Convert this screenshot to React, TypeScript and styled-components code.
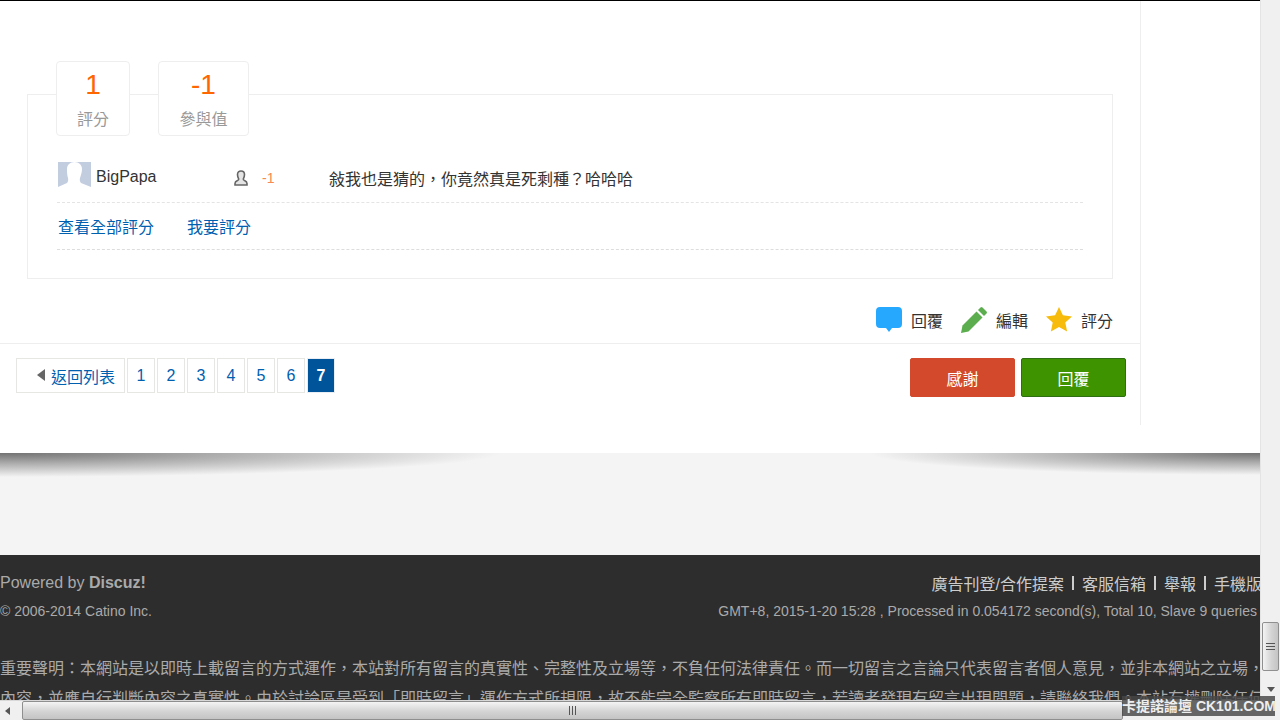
import React from "react";
import styled, { createGlobalStyle } from "styled-components";

const Global = createGlobalStyle`
  html, body {
    margin: 0;
    padding: 0;
    overflow: hidden;
    background: #fff;
  }
  * {
    box-sizing: border-box;
  }
  a {
    text-decoration: none;
  }
`;

const Frame = styled.div`
  position: relative;
  width: 1280px;
  height: 720px;
  overflow: hidden;
  display: grid;
  grid-template-columns: 1260px 20px;
  grid-template-rows: 700px 20px;
  font-family: "Liberation Sans", "Noto Sans CJK TC", sans-serif;
  font-size: 16px;
  color: #333;
`;

const Viewport = styled.div`
  overflow: hidden;
  border-top: 1px solid #000;
`;

const Sheet = styled.div`
  height: 452px;
  background: #fff;
`;

const Main = styled.div`
  width: 1141px;
  height: 424px;
  padding-top: 60px;
  border-right: 1px solid #eee;
`;

const Tabs = styled.div`
  position: relative;
  z-index: 1;
  display: flex;
  gap: 28px;
  height: 75px;
  margin: 0 0 -42px 56px;
`;

const Tab = styled.div<{ $w: number }>`
  width: ${(p) => p.$w}px;
  height: 75px;
  padding-top: 5px;
  background: #fff;
  border: 1px solid #eee;
  border-radius: 4px;
  text-align: center;
`;

const TabNum = styled.div`
  height: 36px;
  font-size: 28px;
  line-height: 36px;
  color: #ff6600;
`;

const TabLabel = styled.div`
  margin-top: 5px;
  line-height: 24px;
  color: #999;
`;

const Card = styled.div`
  width: 1086px;
  height: 185px;
  margin-left: 27px;
  padding: 67px 29px 0 29px;
  border: 1px solid #eee;
`;

const RateRow = styled.div`
  display: grid;
  grid-template-columns: 38px 138px 28px 67px 1fr;
  align-items: center;
  height: 41px;
  padding: 0 0 8px 1px;
  border-bottom: 1px dashed #e4e4e4;
`;

const UserName = styled.span`
  margin-top: -2px;
`;

const RateValue = styled.span`
  font-size: 14px;
  color: #f58a53;
`;

const LinkRow = styled.div`
  display: flex;
  gap: 33px;
  align-items: center;
  height: 47px;
  padding-left: 1px;
  border-bottom: 1px dashed #ddd;
`;

const BlueLink = styled.a`
  color: #0060b0;
`;

const Actions = styled.div`
  display: flex;
  justify-content: flex-end;
  align-items: center;
  height: 65px;
  padding: 17px 27px 0 0;
  border-bottom: 1px solid #eee;
`;

const Action = styled.a`
  display: flex;
  align-items: center;
  gap: 9px;
  margin-left: 18px;
  color: #333;
`;

const Bar = styled.div`
  display: flex;
  justify-content: space-between;
  padding: 14px 14px 0 16px;
`;

const Pager = styled.div`
  display: flex;
  gap: 2px;
`;

const BackLink = styled.a`
  display: flex;
  align-items: center;
  gap: 6px;
  width: 109px;
  height: 35px;
  padding-left: 20px;
  border: 1px solid #e6e6e2;
  color: #0060b0;
`;

const BackArrow = styled.i`
  width: 0;
  height: 0;
  margin-top: -2px;
  border-top: 6px solid transparent;
  border-bottom: 6px solid transparent;
  border-right: 8px solid #666;
`;

const PageLink = styled.a<{ $active?: boolean }>`
  display: flex;
  align-items: center;
  justify-content: center;
  width: 28px;
  height: 35px;
  border: 1px solid ${(p) => (p.$active ? "#e8eef4" : "#e6e6e2")};
  background: ${(p) => (p.$active ? "#00559a" : "#fff")};
  color: ${(p) => (p.$active ? "#fff" : "#0060b0")};
  font-weight: ${(p) => (p.$active ? "bold" : "normal")};
  margin-top: 0;
`;

const Buttons = styled.div`
  display: flex;
  gap: 6px;
`;

const ActionButton = styled.a<{ $bg: string; $edge: string }>`
  display: flex;
  align-items: center;
  justify-content: center;
  width: 105px;
  height: 39px;
  border: 1px solid ${(p) => p.$edge};
  border-radius: 2px;
  background: ${(p) => p.$bg};
  color: #fff;
`;

const ShadowBand = styled.div`
  height: 102px;
  background:
    radial-gradient(ellipse 500px 24px at 0 0, rgba(70, 70, 70, 0.75) 0%, rgba(90, 90, 90, 0.45) 45%, rgba(120, 120, 120, 0) 100%),
    radial-gradient(ellipse 390px 22px at 100% 0, rgba(70, 70, 70, 0.75) 0%, rgba(90, 90, 90, 0.45) 45%, rgba(120, 120, 120, 0) 100%),
    #f4f4f4;
`;

const Footer = styled.div`
  height: 150px;
  padding-top: 17px;
  background: #2d2d2d;
  color: #aaa;
`;

const FooterRow = styled.div<{ $h: number }>`
  display: flex;
  justify-content: space-between;
  align-items: center;
  height: ${(p) => p.$h}px;
`;

const Small = styled.span`
  font-size: 14px;
  padding-right: 3px;
`;

const FooterLinks = styled.div`
  display: flex;
  align-items: center;
  margin-right: -2px;
  white-space: nowrap;
  color: #ccc;
`;

const Sep = styled.i`
  width: 2px;
  height: 14px;
  margin: 0 8px;
  background: #ccc;
`;

const Notice = styled.p`
  margin: 26px 0 0;
  line-height: 30px;
  white-space: nowrap;
  color: #aaa;
`;

const VBar = styled.div`
  display: flex;
  flex-direction: column;
  align-items: center;
  background: #f0f0f0;
  border-left: 1px solid #e4e4e4;
`;

const VTrack = styled.div`
  flex: 1;
  width: 100%;
  padding: 622px 1px 0 1px;
`;

const VThumb = styled.div`
  display: flex;
  flex-direction: column;
  align-items: center;
  justify-content: center;
  gap: 2px;
  height: 49px;
  border: 1px solid #8f8f8f;
  border-radius: 2px;
  background: linear-gradient(90deg, #f4f4f4, #d4d4d4 55%, #c4c4c4);
`;

const Grip = styled.i<{ $v?: boolean }>`
  display: block;
  width: ${(p) => (p.$v ? "1px" : "9px")};
  height: ${(p) => (p.$v ? "9px" : "1px")};
  background: #555;
`;

const VArrow = styled.div`
  width: 0;
  height: 0;
  margin: 0 0 8px;
  border-left: 4px solid transparent;
  border-right: 4px solid transparent;
  border-top: 5px solid #555;
`;

const HBar = styled.div`
  display: flex;
  align-items: center;
  background: #f0f0f0;
  border-top: 1px solid #d8d8d8;
`;

const HArrow = styled.div`
  width: 0;
  height: 0;
  margin: 0 9px 0 5px;
  border-top: 4px solid transparent;
  border-bottom: 4px solid transparent;
  border-right: 5px solid #555;
`;

const HThumb = styled.div`
  display: flex;
  align-items: center;
  justify-content: center;
  gap: 2px;
  width: 1101px;
  height: 19px;
  margin-left: 3px;
  border: 1px solid #8f8f8f;
  border-radius: 2px;
  background: linear-gradient(180deg, #f4f4f4, #d4d4d4 55%, #c4c4c4);
`;

const Corner = styled.div`
  background: #f0f0f0;
`;

const Watermark = styled.div`
  position: absolute;
  right: 5px;
  bottom: 4px;
  width: 153px;
  height: 20px;
  background: rgba(70, 70, 70, 0.82);
  color: #eee;
  font-size: 14px;
  font-weight: bold;
  line-height: 20px;
  text-align: center;
  white-space: nowrap;
`;

const Avatar = () => (
  <svg width="33" height="32" viewBox="0 0 33 32">
    <rect width="33" height="32" fill="#c3cde0" />
    <path d="M9 7c0-4 3-7 7.500-7S24 3 24 7c0 3-1 6-2 9-.5 2 0 4 1 5l10 4v7H0v-7l9-4c1-1 1.500-3 1-5-1-3-1-6-1-9z" fill="#fff" />
  </svg>
);

const UserIcon = () => (
  <svg width="14" height="16" viewBox="0 0 14 16">
    <path d="M3.500 4.500C3.500 2 5 1 7 1s3.500 1 3.500 3.500c0 2-.8 3.500-1.200 4.500-.2.700.2 1 1.200 1.500 1.500.7 2.500 1.500 2.500 3V15H1v-1.500c0-1.500 1-2.300 2.500-3 1-.5 1.400-.8 1.200-1.500-.4-1-1.200-2.500-1.200-4.500z" fill="#e4e4e4" stroke="#666" strokeWidth="1.600" />
  </svg>
);

const BubbleIcon = () => (
  <svg width="26" height="25" viewBox="0 0 26 25">
    <path d="M4 0h18a4 4 0 0 1 4 4v13a4 4 0 0 1-4 4h-6l-3 4-3-4H4a4 4 0 0 1-4-4V4a4 4 0 0 1 4-4z" fill="#26a8ff" />
  </svg>
);

const PencilIcon = () => (
  <svg width="26" height="26" viewBox="0 0 26 26">
    <path d="M1.500 18.500 15.500 4.500 21.500 10.500 7.500 24.500 0 26z" fill="#5bad4e" />
    <path d="M17 3l2.500-2.500a1.500 1.500 0 0 1 2 0l4 4a1.500 1.500 0 0 1 0 2L23 9z" fill="#5bad4e" />
  </svg>
);

const StarIcon = () => (
  <svg width="26" height="25" viewBox="0 0 26 25">
    <path d="M13 0l3.900 8.300 9.100 1.100-6.700 6.200 1.800 9L13 20.100 4.900 24.600l1.800-9L0 9.400l9.100-1.100z" fill="#f7bb0b" />
  </svg>
);

const pages = ["1", "2", "3", "4", "5", "6"];

export default function App() {
  return (
    <Frame>
      <Global />
      <Viewport>
        <Sheet>
          <Main>
            <Tabs>
              <Tab $w={74}>
                <TabNum>1</TabNum>
                <TabLabel>評分</TabLabel>
              </Tab>
              <Tab $w={91}>
                <TabNum>-1</TabNum>
                <TabLabel>參與值</TabLabel>
              </Tab>
            </Tabs>
            <Card>
              <RateRow>
                <Avatar />
                <UserName>BigPapa</UserName>
                <UserIcon />
                <RateValue>-1</RateValue>
                <span>敍我也是猜的，你竟然真是死剩種？哈哈哈</span>
              </RateRow>
              <LinkRow>
                <BlueLink>查看全部評分</BlueLink>
                <BlueLink>我要評分</BlueLink>
              </LinkRow>
            </Card>
            <Actions>
              <Action>
                <BubbleIcon />
                回覆
              </Action>
              <Action>
                <PencilIcon />
                編輯
              </Action>
              <Action>
                <StarIcon />
                評分
              </Action>
            </Actions>
            <Bar>
              <Pager>
                <BackLink>
                  <BackArrow />
                  返回列表
                </BackLink>
                {pages.map((n) => (
                  <PageLink key={n}>{n}</PageLink>
                ))}
                <PageLink $active>7</PageLink>
              </Pager>
              <Buttons>
                <ActionButton $bg="#d2492b" $edge="#d2492b">感謝</ActionButton>
                <ActionButton $bg="#3d9400" $edge="#2f6f14">回覆</ActionButton>
              </Buttons>
            </Bar>
          </Main>
        </Sheet>
        <ShadowBand />
        <Footer>
          <FooterRow $h={22}>
            <span>
              Powered by <b>Discuz!</b>
            </span>
            <FooterLinks>
              廣告刊登/合作提案
              <Sep />
              客服信箱
              <Sep />
              舉報
              <Sep />
              手機版
            </FooterLinks>
          </FooterRow>
          <FooterRow $h={34}>
            <Small>© 2006-2014 Catino Inc.</Small>
            <Small>GMT+8, 2015-1-20 15:28 , Processed in 0.054172 second(s), Total 10, Slave 9 queries</Small>
          </FooterRow>
          <Notice>
            重要聲明：本網站是以即時上載留言的方式運作，本站對所有留言的真實性、完整性及立場等，不負任何法律責任。而一切留言之言論只代表留言者個人意見，並非本網站之立場，
            <br />
            內容，並應自行判斷內容之真實性。由於討論區是受到「即時留言」運作方式所規限，故不能完全監察所有即時留言，若讀者發現有留言出現問題，請聯絡我們。本站有權刪除任何
          </Notice>
        </Footer>
      </Viewport>
      <VBar>
        <VTrack>
          <VThumb>
            <Grip />
            <Grip />
            <Grip />
          </VThumb>
        </VTrack>
        <VArrow />
      </VBar>
      <HBar>
        <HArrow />
        <HThumb>
          <Grip $v />
          <Grip $v />
          <Grip $v />
        </HThumb>
      </HBar>
      <Corner />
      <Watermark>卡提諾論壇 CK101.COM</Watermark>
    </Frame>
  );
}
